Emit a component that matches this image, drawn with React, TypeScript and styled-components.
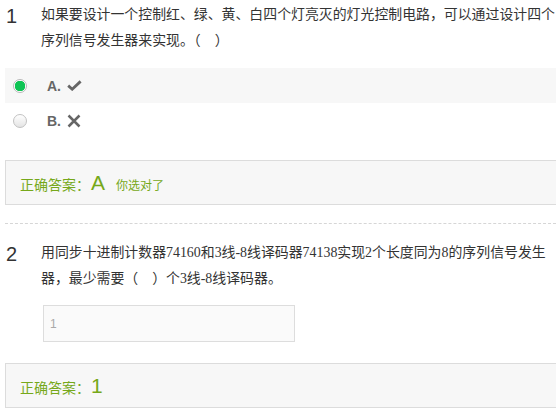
import React from 'react';
import styled, { createGlobalStyle } from 'styled-components';

const GlobalStyle = createGlobalStyle`
    html, body {
        margin: 0;
        padding: 0;
        background: #ffffff;
        overflow: hidden;
    }
`;

const Page = styled.div`
    width: 556px;
    box-sizing: border-box;
    padding: 2px 0 0 5px;
    font-family: "Liberation Sans", Arial, sans-serif;
    color: #333333;
`;

const Question = styled.div<{ top?: number }>`
    display: flex;
    margin-top: ${props => props.top ?? 0}px;
`;

const Num = styled.div`
    width: 36px;
    flex: none;
    font-family: "Liberation Sans", Arial, sans-serif;
    font-size: 20px;
    line-height: 29px;
    color: #333333;
    padding-left: 1px;
    box-sizing: border-box;
`;

const Stem = styled.div`
    flex: 1;
    font-family: "Liberation Serif", "Noto Sans CJK SC", serif;
    font-size: 13.9px;
    line-height: 26px;
    color: #333333;
`;

const Options = styled.div`
    margin-top: 14px;
    display: flex;
    flex-direction: column;
`;

const OptionRow = styled.div<{ active?: boolean }>`
    height: 35px;
    display: flex;
    align-items: center;
    padding-left: 8px;
    background: ${props => (props.active ? '#f7f7f7' : 'transparent')};
`;

const Radio = styled.span<{ checked?: boolean }>`
    width: 12px;
    height: 12px;
    border-radius: 50%;
    flex: none;
    border: 1px solid ${props => (props.checked ? '#b9b9b9' : '#c2c2c2')};
    background: ${props =>
        props.checked
            ? 'radial-gradient(circle, #10c455 0, #10c455 5px, #ffffff 5.5px)'
            : 'linear-gradient(#ffffff, #e4e4e4)'};
`;

const OptionLabel = styled.span`
    margin-left: 20px;
    font-size: 14px;
    font-weight: bold;
    color: #666666;
    display: flex;
    align-items: center;
    gap: 6px;
`;

const AnswerBox = styled.div<{ top: number }>`
    margin-top: ${props => props.top}px;
    height: 43px;
    border: 1px solid #dcdcdc;
    border-right: none;
    background: #f7f7f7;
    display: flex;
    align-items: center;
    padding-left: 14px;
    color: #76a81a;
    font-family: "Noto Sans CJK SC", "Liberation Sans", sans-serif;
`;

const AnswerTitle = styled.span`
    font-size: 14px;
    padding-top: 3px;
`;

const AnswerValue = styled.span`
    font-family: "Liberation Sans", Arial, sans-serif;
    font-size: 21px;
    margin-left: 1px;
`;

const AnswerNote = styled.span`
    font-size: 12px;
    margin-left: 11px;
    padding-top: 3px;
`;

const Divider = styled.div`
    margin-top: 18px;
    border-top: 1px dashed #d6d6d6;
`;

const Fill = styled.div`
    margin: 13px 0 0 38px;
    width: 252px;
    height: 37px;
    box-sizing: border-box;
    border: 1px solid #dddddd;
    background: #fafafa;
    display: flex;
    align-items: center;
    padding-left: 6px;
    font-size: 12px;
    color: #a9a9a9;
`;

const Check = () => (
    <svg width="15" height="11" viewBox="0 0 15 11">
        <path d="M1.2 5.6 L5.2 9.2 L13.6 1.4" fill="none" stroke="#666" strokeWidth="2.8" strokeLinejoin="miter" />
    </svg>
);

const Cross = () => (
    <svg width="14" height="14" viewBox="0 0 14 14">
        <path d="M1.5 1.5 L12.5 12.5 M12.5 1.5 L1.5 12.5" stroke="#666" strokeWidth="2.5" />
    </svg>
);

export default function App() {
    return (
        <Page>
            <GlobalStyle />
            <Question>
                <Num>1</Num>
                <Stem>如果要设计一个控制红、绿、黄、白四个灯亮灭的灯光控制电路，可以通过设计四个序列信号发生器来实现。（　）</Stem>
            </Question>
            <Options>
                <OptionRow active>
                    <Radio checked />
                    <OptionLabel>A. <Check /></OptionLabel>
                </OptionRow>
                <OptionRow>
                    <Radio />
                    <OptionLabel>B. <Cross /></OptionLabel>
                </OptionRow>
            </Options>
            <AnswerBox top={22}>
                <AnswerTitle>正确答案：</AnswerTitle>
                <AnswerValue>A</AnswerValue>
                <AnswerNote>你选对了</AnswerNote>
            </AnswerBox>
            <Divider />
            <Question top={16}>
                <Num>2</Num>
                <Stem>用同步十进制计数器74160和3线-8线译码器74138实现2个长度同为8的序列信号发生器，最少需要（　）个3线-8线译码器。</Stem>
            </Question>
            <Fill>1</Fill>
            <AnswerBox top={21}>
                <AnswerTitle>正确答案：</AnswerTitle>
                <AnswerValue>1</AnswerValue>
            </AnswerBox>
        </Page>
    );
}
